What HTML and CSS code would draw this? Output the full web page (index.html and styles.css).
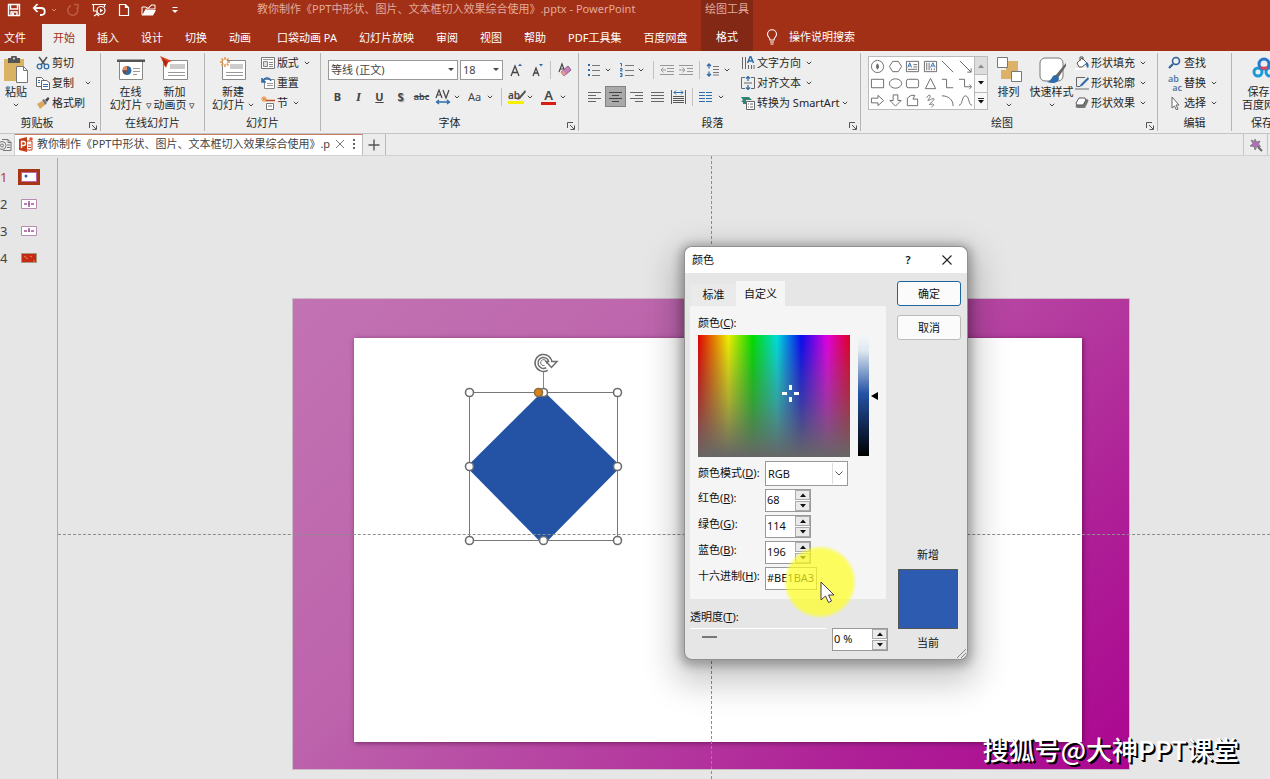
FILE: index.html
```html
<!DOCTYPE html>
<html lang="zh-CN">
<head>
<meta charset="utf-8">
<title>教你制作《PPT中形状、图片、文本框切入效果综合使用》.pptx - PowerPoint</title>
<link rel="stylesheet" href="styles.css">
</head>
<body>
<svg class="defs" aria-hidden="true">
  <symbol id="chev" viewBox="0 0 6 4"><path d="M.8.8 3 3 5.200.8" fill="none" stroke="#444"/></symbol>
  <symbol id="launch" viewBox="0 0 8 8"><path d="M.5 6V.5H6M3 3l4 4M7.500 3.500v4h-4" fill="none" stroke="#555"/></symbol>
  <symbol id="up" viewBox="0 0 6 4"><path d="M0 4 3 .5 6 4z" fill="#111"/></symbol>
  <symbol id="down" viewBox="0 0 6 4"><path d="M0 0 3 3.500 6 0z" fill="#111"/></symbol>
</svg>

<header class="head">
  <div class="head-main">
    <div class="titlebar">
      <div class="qat">
        <button aria-label="保存"><svg width="14" height="14" viewBox="0 0 14 14" fill="none" stroke="#fff" stroke-width="1.400"><path d="M1.500 1.500h11v11h-11zM3.500 1.500v4.500h7V1.500M4 12.500V9h6v3.500"/><path d="M5 10h2v3H5z" fill="#fff" stroke="none"/></svg></button>
        <button class="undo" aria-label="撤消"><svg width="26" height="14" viewBox="0 0 26 14" fill="none" stroke="#fff" stroke-width="1.800"><path d="M2 5h7c5 0 5 7 0 7H8M5.500 1 1.800 5l3.700 4"/><path d="m20 6 2 2 2-2" stroke="#d6907e" stroke-width="1"/></svg></button>
        <button aria-label="恢复"><svg width="14" height="14" viewBox="0 0 14 14" fill="none" stroke="#bd5a42" stroke-width="1.600"><path d="M5 2.500a5 5 0 1 0 6 2M8 1.500h4v4"/></svg></button>
        <button aria-label="放映"><svg width="16" height="14" viewBox="0 0 16 14" fill="none" stroke="#fff" stroke-width="1.200"><path d="M1 1.500h14M2.500 2v6h3M13.500 2v2M6 8v3M3 13l3-2 2 2"/><circle cx="10" cy="7.500" r="4"/><path d="m9 5.500 3 2-3 2z" fill="#fff" stroke="none"/></svg></button>
        <button aria-label="新建"><svg width="12" height="14" viewBox="0 0 12 14" fill="none" stroke="#fff" stroke-width="1.200"><path d="M1.500 1.500h6l3 3v8h-9zM7.500 1.500v3h3"/></svg></button>
        <button aria-label="打开"><svg width="16" height="14" viewBox="0 0 16 14"><path d="M1 12V4h4l1 1h2V4l2-1V2h4v4H5l-3 6z" fill="none" stroke="#fff"/><path d="M4.500 7H15l-3 5.500H1.500z" fill="#fff"/></svg></button>
        <button class="custom-qat" aria-label="自定义快速访问工具栏"><svg width="8" height="8" viewBox="0 0 8 8"><path d="M1.500 1.500h5" stroke="#fff"/><path d="M1 4h6L4 7z" fill="#fff"/></svg></button>
      </div>
      <div class="doc-title">教你制作《PPT中形状、图片、文本框切入效果综合使用》.pptx - PowerPoint</div>
    </div>
    <nav class="tabs">
      <button class="file">文件</button><button class="on">开始</button><button>插入</button><button>设计</button><button>切换</button><button>动画</button><button class="wide">口袋动画 PA</button><button>幻灯片放映</button><button>审阅</button><button>视图</button><button>帮助</button><button>PDF工具集</button><button>百度网盘</button>
    </nav>
  </div>
  <div class="context"><span>绘图工具</span><button>格式</button></div>
  <div class="tell"><button><svg width="12" height="16" viewBox="0 0 12 16" fill="none" stroke="#fff" stroke-width="1.100"><path d="M4 11C4 8.500 1.500 8 1.500 5.200a4.500 4.500 0 0 1 9 0C10.500 8 8 8.500 8 11zM4 13h4M4.500 15h3"/></svg>操作说明搜索</button></div>
</header>

<section class="ribbon">
  <div class="group g-clip">
    <div class="body">
      <button class="big"><svg width="26" height="28" viewBox="0 0 26 28"><path d="M1 3h20v22H1z" fill="#d9b262"/><path d="M5 2h3a3 3 0 0 1 6 0h3v5H5z" fill="#555"/><circle cx="11" cy="2.500" r="1" fill="#eee"/><path d="M13.500 10.500h7l4 4v12h-11z" fill="#fff" stroke="#777"/><path d="M20.500 10.500v4h4" fill="none" stroke="#777"/></svg><span>粘贴</span><svg class="chev"><use href="#chev"/></svg></button>
      <div class="stack">
        <button><svg width="14" height="14" viewBox="0 0 14 14" fill="none"><path d="M3 1l6 8M11 1 5 9" stroke="#555" stroke-width="1.600"/><circle cx="3.500" cy="10.500" r="2.300" stroke="#2f6cab" stroke-width="1.300"/><circle cx="10.500" cy="10.500" r="2.300" stroke="#2f6cab" stroke-width="1.300"/></svg>剪切</button>
        <button><svg width="14" height="14" viewBox="0 0 14 14" stroke="#666"><path d="M.5 1.500h5l2 2v7h-7z" fill="#fff"/><path d="M5.500 4.500h5l3 2v7h-8z" fill="#fff"/><path d="M2 4.500h2M2 6.500h2M7 8.500h5M7 10.500h5" stroke="#2f6cab"/></svg>复制 <svg class="chev far"><use href="#chev"/></svg></button>
        <button><svg width="14" height="14" viewBox="0 0 14 14"><path d="m1 8 5-3 3 4-5 4c-1-2-2-3-3-5z" fill="#dba85a"/><path d="m6 4 2-1 3 4-2 2z" fill="#777"/><path d="m9 4 3-3 1.500 1.500L11 6z" fill="#444"/></svg>格式刷</button>
      </div>
    </div>
    <footer><span>剪贴板</span><button aria-label="剪贴板选项"><svg><use href="#launch"/></svg></button></footer>
  </div>

  <div class="group g-online">
    <div class="body">
      <button class="big"><svg width="28" height="28" viewBox="0 0 28 28"><path d="M2.500 5.500h23v18h-23z" fill="#fff" stroke="#888"/><path d="M0 3.500h28v2.500H0z" fill="#555"/><circle cx="10" cy="14.500" r="4.500" fill="#2f6aa5"/><path d="M10 14.500V10a4.500 4.500 0 0 0-4.500 4.500z" fill="#eb8b5c"/><path d="M10 14.500H5.500A4.500 4.500 0 0 0 8 18.500z" fill="#7b4335"/><path d="M16 12.500h7M16 15.500h7M16 18.500h4" stroke="#999"/></svg><span>在线<br>幻灯片 <i>▿</i></span></button>
      <button class="big"><svg width="28" height="28" viewBox="0 0 28 28"><path d="M3.500 4.500h24v19h-24z" fill="#fff" stroke="#888"/><path d="M10 8h15v5H10z" fill="#ccc"/><path d="M8 16.500h17M8 19.500h17" stroke="#999"/><path d="M0 0 12 5 8 6.500 6 12z" fill="#dc4726"/><path d="m2 2 6 4-3 5z" fill="#ad2815"/></svg><span>新加<br>动画页 <i>▿</i></span></button>
    </div>
    <footer><span>在线幻灯片</span></footer>
  </div>

  <div class="group g-slide">
    <div class="body">
      <button class="big"><svg width="28" height="28" viewBox="0 0 28 28"><path d="M3.500 4.500h23v19h-23z" fill="#fff" stroke="#888"/><path d="M11 8h13v5H11z" fill="#ccc"/><path d="M7 16.500h17M7 19.500h17" stroke="#999"/><path d="M6 1v10M1 6h10M2.500 2.500l7 7M9.500 2.500l-7 7" stroke="#e68d3c" stroke-width="1.400"/><circle cx="6" cy="6" r="2.200" fill="#fff"/></svg><span>新建<br>幻灯片 <svg class="chev"><use href="#chev"/></svg></span></button>
      <div class="stack">
        <button><svg width="14" height="14" viewBox="0 0 14 14"><path d="M.5 1.500h13v11H.5z" fill="#fff" stroke="#777"/><path d="M2 3.500h10" stroke="#999"/><path d="M2.500 5.500h4v5h-4zM8 6.500h4M8 8.500h4M8 10.500h4" fill="#ddd" stroke="#888"/></svg>版式 <svg class="chev"><use href="#chev"/></svg></button>
        <button><svg width="14" height="14" viewBox="0 0 14 14"><path d="M3.500 3.500h10v9h-10z" fill="#fff" stroke="#888"/><path d="M6 7.500h6M6 9.500h6" stroke="#999"/><path d="M1 2v4h4M1.500 5.500C4 1 8 1 10 5" fill="none" stroke="#2f6cab" stroke-width="1.600"/></svg>重置</button>
        <button><svg width="14" height="14" viewBox="0 0 14 14"><path d="M4 4.500h10" stroke="#c74a22" stroke-width="1.500"/><path d="M5.500 7.500h7v6h-7z" fill="#fff" stroke="#777"/><path d="M7 10h4" stroke="#777"/><path d="M3 0v6M0 3h6M1 1l4 4M5 1 1 5" stroke="#e68d3c"/></svg>节 <svg class="chev"><use href="#chev"/></svg></button>
      </div>
    </div>
    <footer><span>幻灯片</span></footer>
  </div>

  <div class="group g-font">
    <div class="rows">
      <div class="row">
        <span class="pick face"><select aria-label="字体"><option>等线 (正文)</option></select></span>
        <span class="pick size"><select aria-label="字号"><option>18</option></select></span>
        <button class="tb" aria-label="增大字号"><svg width="16" height="16" viewBox="0 0 16 16"><path d="m3 14 4-10 4 10M4.500 10.500h5" fill="none" stroke="#444" stroke-width="1.300"/><path d="m10 4 2-2.500L14 4z" fill="#2f6cab"/></svg></button>
        <button class="tb" aria-label="减小字号"><svg width="16" height="16" viewBox="0 0 16 16"><path d="m4 14 3-8 3 8M5 11h4" fill="none" stroke="#444" stroke-width="1.300"/><path d="m10 2 2 2.500L14 2z" fill="#2f6cab"/></svg></button>
        <i class="sep"></i>
        <button class="tb" aria-label="清除格式"><svg width="16" height="16" viewBox="0 0 16 16"><path d="m2 10 3-8 3 8M3 7h4" fill="none" stroke="#444" stroke-width="1.200"/><path d="m4 10 7-6 3 4-7 6z" fill="#c680b8" stroke="#8d588f"/><path d="m4 10 2-2 3 4-2 2z" fill="#ec9b8a"/></svg></button>
      </div>
      <div class="row">
        <button class="tb b">B</button><button class="tb it">I</button><button class="tb u">U</button><button class="tb sh">S</button><button class="tb st">abc</button>
        <button class="dd" aria-label="字符间距"><svg width="16" height="16" viewBox="0 0 16 16" fill="none"><path d="m1 9 3-8 3 8M2 6h4M8 1l3 8 3-8" stroke="#444" stroke-width="1.200"/><path d="M2 13h12M4 11l-2.500 2L4 15M12 11l2.500 2-2.500 2" stroke="#2f6cab" stroke-width="1.300"/></svg><svg class="chev"><use href="#chev"/></svg></button>
        <button class="dd">Aa<svg class="chev"><use href="#chev"/></svg></button>
        <i class="sep"></i>
        <button class="dd" aria-label="突出显示"><span class="hl">ab<svg width="10" height="12" viewBox="0 0 10 12"><path d="M9 1 3 8l-2 3 3-1 6-7z" fill="#555"/></svg></span><svg class="chev"><use href="#chev"/></svg></button>
        <button class="dd"><span class="fc">A</span><svg class="chev"><use href="#chev"/></svg></button>
      </div>
    </div>
    <footer><span>字体</span><button aria-label="字体选项"><svg><use href="#launch"/></svg></button></footer>
  </div>

  <div class="group g-para">
    <div class="body">
      <div class="rows">
        <div class="row">
          <button class="dd" aria-label="项目符号"><svg width="14" height="14" viewBox="0 0 14 14"><path d="M1 1h2v2H1zM1 6h2v2H1zM1 11h2v2H1z" fill="#2f6cab"/><path d="M5 2.500h8M5 7.500h8M5 12.500h8" stroke="#777"/></svg><svg class="chev"><use href="#chev"/></svg></button>
          <button class="dd" aria-label="编号"><svg width="14" height="14" viewBox="0 0 14 14"><path d="M0 .5h1.500V3.500M0 5.500h2v1.500H.5v1h2M0 10.500h2v3H0M.5 12h1.500" fill="none" stroke="#2f6cab"/><path d="M5 2.500h9M5 7.500h9M5 12.500h9" stroke="#777"/></svg><svg class="chev"><use href="#chev"/></svg></button>
          <i class="sep"></i>
          <button class="tb" aria-label="减少缩进"><svg width="14" height="14" viewBox="0 0 14 14" fill="none" stroke="#999"><path d="M0 2.500h14M7 5.500h7M7 8.500h7M0 11.500h14M6 7H1M3.500 4.500 1 7l2.500 2.500"/></svg></button>
          <button class="tb" aria-label="增加缩进"><svg width="14" height="14" viewBox="0 0 14 14" fill="none" stroke="#999"><path d="M0 2.500h14M8 5.500h6M8 8.500h6M0 11.500h14M0 7h6M3.500 4.500 6 7 3.500 9.500"/></svg></button>
          <i class="sep"></i>
          <button class="dd" aria-label="行距"><svg width="14" height="14" viewBox="0 0 14 14" fill="none"><path d="M3 1v4.500M3 8.500V13M1 3l2-2 2 2M1 11l2 2 2-2" stroke="#2f6cab" stroke-width="1.300"/><path d="M7 3.500h6M7 6.500h6M7 9.500h6M7 12h6" stroke="#777"/></svg><svg class="chev"><use href="#chev"/></svg></button>
        </div>
        <div class="row">
          <button class="tb" aria-label="左对齐"><svg width="13" height="10" viewBox="0 0 13 10" stroke="#666"><path d="M0 .5h13M0 3.500h8M0 6.500h13M0 9.500h8"/></svg></button>
          <button class="tb on" aria-label="居中"><svg width="13" height="10" viewBox="0 0 13 10" stroke="#444"><path d="M0 .5h13M3 3.500h7M0 6.500h13M3 9.500h7"/></svg></button>
          <button class="tb" aria-label="右对齐"><svg width="13" height="10" viewBox="0 0 13 10" stroke="#666"><path d="M0 .5h13M5 3.500h8M0 6.500h13M5 9.500h8"/></svg></button>
          <button class="tb" aria-label="两端对齐"><svg width="13" height="10" viewBox="0 0 13 10" stroke="#666"><path d="M0 .5h13M0 3.500h13M0 6.500h13M0 9.500h13"/></svg></button>
          <button class="tb" aria-label="分散对齐"><svg width="15" height="14" viewBox="0 0 15 14" fill="none"><path d="M.5 0v14M14.500 0v14M3 2.500h9M5 .5l-2 2 2 2M10 .5l2 2-2 2" stroke="#2f6cab"/><path d="M2 6.500h11M2 8.500h11M2 10.500h11M2 12.500h11" stroke="#555"/></svg></button>
          <i class="sep"></i>
          <button class="dd" aria-label="分栏"><svg width="13" height="10" viewBox="0 0 13 10" stroke="#2f6cab"><path d="M0 .5h6M0 3.500h6M0 6.500h6M0 9.500h6M7 .5h6M7 3.500h6M7 6.500h6M7 9.500h6"/></svg><svg class="chev"><use href="#chev"/></svg></button>
        </div>
      </div>
      <div class="stack">
        <button><svg width="14" height="14" viewBox="0 0 14 14" fill="none"><path d="M1.500 1v12M4.500 1v12M7.500 9v4M10.500 9v4M13 9v4" stroke="#666"/><path d="m6.500 7 3-7 3 7M7.500 5h4" stroke="#2f6cab" stroke-width="1.500"/></svg>文字方向 <svg class="chev"><use href="#chev"/></svg></button>
        <button><svg width="14" height="14" viewBox="0 0 14 14" fill="none"><path d="M4 1.500H.5v11H4M10 1.500h3.500v11H10" stroke="#666"/><path d="M3 7h8" stroke="#666"/><path d="M7 0v5M7 9v5M5 2.500l2-2 2 2M5 11.500l2 2 2-2" stroke="#2f6cab" stroke-width="1.300"/></svg>对齐文本 <svg class="chev"><use href="#chev"/></svg></button>
        <button><svg width="14" height="14" viewBox="0 0 14 14"><path d="M0 1h8l3 3H5v4H2V6H0l2-2z" fill="#2c8673"/><path d="M5.500 5.500h8v8h-8z" fill="#fff" stroke="#666"/><path d="M7 8h1M9 8h3M7 11h1M9 11h3" stroke="#666"/></svg>转换为 SmartArt <svg class="chev near"><use href="#chev"/></svg></button>
      </div>
    </div>
    <footer><span>段落</span><button aria-label="段落选项"><svg><use href="#launch"/></svg></button></footer>
  </div>

  <div class="group g-draw">
    <div class="body">
      <div class="gallery">
        <div class="shapes">
          <button aria-label="八边形"><svg viewBox="0 0 16 16"><circle cx="8" cy="8" r="6.500"/><path d="M8 5v6M7 6v4M9 6v4"/></svg></button>
          <button aria-label="六边形"><svg viewBox="0 0 16 16"><path d="M1.500 8l3.500-5.500h6l3.500 5.500-3.500 5.500H5z"/></svg></button>
          <button aria-label="文本框"><svg viewBox="0 0 16 16"><path d="M1.500 2.500h13v11h-13zM9 6h4M9 8.500h4M3 11h10"/><path d="m3 9 2-5 2 5M4 7.500h2" stroke="#2f6cab"/></svg></button>
          <button aria-label="竖排文本框"><svg viewBox="0 0 16 16"><path d="M1.500 2.500h13v11h-13zM4 4v8M6.500 4v8M9 10v2M12 10v2"/><path d="m8 9 2.500-5L13 9M9 7.500h3" stroke="#2f6cab"/></svg></button>
          <button aria-label="直线"><svg viewBox="0 0 16 16"><path d="m2 2 12 12"/></svg></button>
          <button aria-label="箭头线"><svg viewBox="0 0 16 16"><path d="m2 2 12 12M14 10v4h-4"/></svg></button>
          <button aria-label="矩形"><svg viewBox="0 0 16 16"><path d="M1.500 3.500h13v9h-13z"/></svg></button>
          <button aria-label="椭圆"><svg viewBox="0 0 16 16"><ellipse cx="8" cy="8" rx="6.500" ry="5"/></svg></button>
          <button aria-label="圆角矩形"><svg viewBox="0 0 16 16"><rect x="1.500" y="3.500" width="13" height="9" rx="2"/></svg></button>
          <button aria-label="三角形"><svg viewBox="0 0 16 16"><path d="m8 2.500 5.500 11h-11z"/></svg></button>
          <button aria-label="肘形"><svg viewBox="0 0 16 16"><path d="M2 3.500h5v9h7"/></svg></button>
          <button aria-label="肘形箭头"><svg viewBox="0 0 16 16"><path d="M1 3.500h6v8h7M12 9l2.500 2.500L12 14"/></svg></button>
          <button aria-label="右箭头"><svg viewBox="0 0 16 16"><path d="M1.500 5.500h7v-3L14.500 8l-6 5.500v-3h-7z"/></svg></button>
          <button aria-label="下箭头"><svg viewBox="0 0 16 16"><path d="M5.500 2v6h-3.500L8 14l6-6h-3.500V2z"/></svg></button>
          <button aria-label="任意多边形"><svg viewBox="0 0 16 16"><path d="M2.500 13.500v-8l4-3h4l-2 4h5v7z"/></svg></button>
          <button aria-label="自由曲线"><svg viewBox="0 0 16 16"><path d="M4 5c2-4 5-3 3 0s-3 4 1 2 5-1 2 2-5 4-1 3 2 2 0 3"/></svg></button>
          <button aria-label="弧形"><svg viewBox="0 0 16 16"><path d="M2 3c7 0 12 4 12 11"/></svg></button>
          <button aria-label="曲线"><svg viewBox="0 0 16 16"><path d="M1 13C5 13 4 3 8 3s3 10 7 10"/></svg></button>
        </div>
        <div class="scroll"><button aria-label="上一行" class="dim"><svg><use href="#up"/></svg></button><button aria-label="下一行"><svg><use href="#down"/></svg></button><button aria-label="更多形状" class="more"><svg><use href="#down"/></svg></button></div>
      </div>
      <button class="big arrange"><svg width="26" height="28" viewBox="0 0 26 28"><path d="M10 5h12v10H10zM5 14h12v9H5z" fill="#dcb268"/><path d="M1.500 1.500h10v10h-10zM15.500 15.500h10v10h-10z" fill="#fff" stroke="#777"/></svg><span>排列</span><svg class="chev"><use href="#chev"/></svg></button>
      <button class="big quick"><svg width="28" height="28" viewBox="0 0 28 28"><rect x="2" y="2" width="23" height="23" rx="5" fill="#fff" stroke="#777"/><path d="M28 7 17 20l3 2 8-12z" fill="#666"/><path d="M18 19c-5 0-3 5-9 7 6 2 12 1 12-4z" fill="#2f6cab"/></svg><span>快速样式</span><svg class="chev"><use href="#chev"/></svg></button>
      <div class="stack">
        <button><svg width="14" height="14" viewBox="0 0 14 14"><path d="m2 7 5-5 5 5-5 4H4z" fill="#fff" stroke="#555"/><path d="M5 5V1h3v3" fill="none" stroke="#555"/><path d="M11 6c3 1 3 4 2 6-2-1-2-3-2-6z" fill="#2f6cab"/><path d="M0 12h11v2H0z" fill="#fff"/></svg>形状填充 <svg class="chev"><use href="#chev"/></svg></button>
        <button><svg width="14" height="14" viewBox="0 0 14 14"><path d="M10 1.500H1.500v9H5" fill="none" stroke="#666"/><path d="m13 1-7 7-2 3 3-1 7-7z" fill="#2f6cab"/><path d="M0 13h14" stroke="#999" stroke-width="1.500"/></svg>形状轮廓 <svg class="chev"><use href="#chev"/></svg></button>
        <button><svg width="14" height="14" viewBox="0 0 14 14"><path d="m1 9 3-6h7c2 0 3 1 2 3l-3 6H3c-2 0-3-1-2-3z" fill="#777"/><path d="m1 7 3-5h6l1 2-3 5H2z" fill="#fff" stroke="#555"/></svg>形状效果 <svg class="chev"><use href="#chev"/></svg></button>
      </div>
    </div>
    <footer><span>绘图</span><button aria-label="形状格式选项"><svg><use href="#launch"/></svg></button></footer>
  </div>

  <div class="group g-edit">
    <div class="body">
      <div class="stack">
        <button><svg width="14" height="14" viewBox="0 0 14 14" fill="none" stroke="#2f5f96"><circle cx="8" cy="5" r="3.500" stroke-width="1.600"/><path d="M5 8 1 12" stroke-width="2.200"/></svg>查找</button>
        <button><span class="abac"><b>ab</b><b>ac</b></span>替换 <svg class="chev mid"><use href="#chev"/></svg></button>
        <button><svg width="14" height="14" viewBox="0 0 14 14"><path d="M4 1v11l2.500-2 2 4 1.500-1-2-4h3z" fill="#fff" stroke="#666"/></svg>选择 <svg class="chev"><use href="#chev"/></svg></button>
      </div>
    </div>
    <footer><span>编辑</span></footer>
  </div>

  <div class="group g-save">
    <div class="body">
      <button class="big"><svg width="28" height="28" viewBox="0 0 28 28" fill="none" stroke="#1a9bd8" stroke-width="3"><circle cx="8" cy="16" r="4"/><circle cx="20" cy="16" r="4"/><circle cx="14" cy="8" r="5" stroke="#2577cf"/><path d="M11 11a4 4 0 0 0 6 0" stroke="#e0475b"/></svg><span>保存到<br>百度网盘</span></button>
    </div>
    <footer><span>保存</span></footer>
  </div>
</section>

<div class="docbar">
  <button class="home" aria-label="文档列表"><svg width="14" height="14" viewBox="0 0 14 14" fill="none" stroke="#777"><path d="M3 1.500h6l3 3v8H4M9 1.500v3h3M8 7h3M8 9.500h3"/><circle cx="3" cy="7.500" r="4"/><circle cx="3" cy="7.500" r="1.500"/></svg></button>
  <div class="doctab">
    <svg width="14" height="15" viewBox="0 0 14 15"><path d="m0 2 8-2v15l-8-2z" fill="#c43e1c"/><path d="M8 4h5v9H8" fill="#fff" stroke="#c43e1c"/><path d="M9 8h3M9 10.500h3" stroke="#c43e1c"/><circle cx="12" cy="2" r="1.800" fill="#e0582f"/><path d="M2.500 11V4.500h2a1.800 1.800 0 0 1 0 4h-2" fill="none" stroke="#fff" stroke-width="1.300"/></svg>
    <span>教你制作《PPT中形状、图片、文本框切入效果综合使用》.p</span>
    <button aria-label="关闭"><svg width="10" height="10" viewBox="0 0 10 10"><path d="m1 1 8 8M9 1 1 9" stroke="#777"/></svg></button>
    <button aria-label="更多"><svg width="4" height="10" viewBox="0 0 4 10"><path d="M1 0h2v2H1zM1 4h2v2H1zM1 8h2v2H1z" fill="#666"/></svg></button>
  </div>
  <button class="add" aria-label="新建标签"><svg width="12" height="12" viewBox="0 0 12 12"><path d="M6 .5v11M.5 6h11" stroke="#555" stroke-width="1.400"/></svg></button>
  <button class="wand" aria-label="工具"><svg width="14" height="14" viewBox="0 0 14 14"><path d="m6 1 1.500 3L11 3 9.500 6l2 2.500H8L6 12 5 8.500 1 8l3-2.500L2 2l3.500 1.500z" fill="#b56abb" stroke="#777" stroke-width=".8"/><path d="m9 9 4 4" stroke="#666" stroke-width="2"/></svg></button>
</div>

<main class="work">
  <ol class="thumbs">
    <li class="on"><span>1</span><svg width="22" height="16" viewBox="0 0 22 16"><path d="M0 0h22v16H0z" fill="#a83416"/><path d="M3 3h16v10H3z" fill="#bb67ad"/><path d="M4 4h14v8H4z" fill="#fff"/><circle cx="8" cy="7" r="1.500" fill="#3558aa"/></svg></li>
    <li><span>2</span><svg width="22" height="16" viewBox="0 0 22 16"><path d="M3.500 3.500h15v9h-15z" fill="#fff" stroke="#b78ab0"/><path d="M6 8h3M10 8h2M13 8h3M11 5v6" stroke="#a4529a" stroke-width="1.500"/></svg></li>
    <li><span>3</span><svg width="22" height="16" viewBox="0 0 22 16"><path d="M3.500 3.500h15v9h-15z" fill="#fff" stroke="#b78ab0"/><path d="M6 8h3M10 8h2M13 8h3M11 5v4" stroke="#a4529a" stroke-width="1.500"/></svg></li>
    <li><span>4</span><svg width="22" height="16" viewBox="0 0 22 16"><path d="M3.500 3.500h15v9h-15z" fill="#c52a14" stroke="#a59a80"/><path d="m6 6 4 3M12 6l2 1M15 11h2" stroke="#e9884c"/></svg></li>
  </ol>
  <div class="canvas">
    <div class="slide">
      <div class="panel">
        <svg class="shape" width="160" height="212" viewBox="0 0 160 212">
          <path d="M80.500 46v-18" stroke="#888"/>
          <path d="M80.500 49 156 122.500v4L83 200.500h-5L5 126.500v-3L78 51z" fill="#2452a5"/>
          <path d="M6.500 50.500h148v148H6.500z" fill="none" stroke="#777"/>
          <g fill="#fff" stroke="#6d6d6d" stroke-width="1.600"><circle cx="6.500" cy="50.500" r="4"/><circle cx="154.500" cy="50.500" r="4"/><circle cx="80.500" cy="50.500" r="4"/><circle cx="6.500" cy="124.500" r="4"/><circle cx="154.500" cy="124.500" r="4"/><circle cx="6.500" cy="198.500" r="4"/><circle cx="80.500" cy="198.500" r="4"/><circle cx="154.500" cy="198.500" r="4"/></g>
          <circle cx="75.500" cy="50.500" r="4" fill="#d98314" stroke="#857050" stroke-width="1.600"/>
          <path d="M87.500 21a7 7 0 1 0-3.500 6" fill="none" stroke="#6d6d6d" stroke-width="4.500"/>
          <path d="M83 19.500h11l-5.500 6z" fill="#fff" stroke="#6d6d6d" stroke-width="1.500"/>
          <path d="M87.500 21a7 7 0 1 0-3.500 6" fill="none" stroke="#fff" stroke-width="1.500"/>
          <path d="M83.500 21.500a3 3 0 1 0-2 2" fill="none" stroke="#6d6d6d" stroke-width="1"/>
        </svg>
      </div>
    </div>
    <i class="guide v"></i><i class="guide h"></i>
  </div>
</main>

<form class="dialog" role="dialog" aria-label="颜色">
  <div class="dlg-title"><span>颜色</span><button type="button">?</button><button type="button" aria-label="关闭"><svg width="10" height="10" viewBox="0 0 10 10"><path d="m.5.5 9 9M9.500.5l-9 9" stroke="#222" stroke-width="1.100"/></svg></button></div>
  <div class="dlg-body">
    <div class="left">
      <div class="dlg-tabs"><button type="button">标准</button><button type="button" class="on">自定义</button></div>
      <div class="custom">
        <div class="cap">颜色(<u>C</u>):</div>
        <div class="mix">
          <div class="spectrum"><svg width="17" height="17" viewBox="0 0 17 17"><path d="M8.500 0v5M8.500 12v5M0 8.500h5M12 8.500h5" stroke="#fff" stroke-width="3"/></svg></div>
          <div class="lum"></div>
          <svg width="7" height="8" viewBox="0 0 7 8"><path d="M7 0v8L0 4z"/></svg>
        </div>
        <div class="fields">
          <label for="mode" class="mid">颜色模式(<u>D</u>):</label><span class="pick mode"><select id="mode"><option>RGB</option></select><svg width="8" height="5" viewBox="0 0 8 5"><path d="m.5.5 3.500 3.500L7.500.5" fill="none" stroke="#555"/></svg></span>
          <label for="r">红色(<u>R</u>):</label><span class="spin"><input id="r" value="68"><span><button type="button" aria-label="增加"><svg><use href="#up"/></svg></button><button type="button" aria-label="减少"><svg><use href="#down"/></svg></button></span></span>
          <label for="g">绿色(<u>G</u>):</label><span class="spin"><input id="g" value="114"><span><button type="button" aria-label="增加"><svg><use href="#up"/></svg></button><button type="button" aria-label="减少"><svg><use href="#down"/></svg></button></span></span>
          <label for="b">蓝色(<u>B</u>):</label><span class="spin"><input id="b" value="196"><span><button type="button" aria-label="增加"><svg><use href="#up"/></svg></button><button type="button" aria-label="减少"><svg><use href="#down"/></svg></button></span></span>
          <label for="hex">十六进制(<u>H</u>):</label><input id="hex" class="hex" value="#BE1BA3">
        </div>
      </div>
      <div class="alpha">
        <div class="track"><label for="alpha">透明度(<u>T</u>):</label><input id="alpha" type="range" min="0" max="100" value="10"></div>
        <span class="spin wide"><input aria-label="透明度百分比" value="0 %"><span><button type="button" aria-label="增加"><svg><use href="#up"/></svg></button><button type="button" aria-label="减少"><svg><use href="#down"/></svg></button></span></span>
      </div>
    </div>
    <div class="right">
      <button type="button" class="cmd ok">确定</button>
      <button type="button" class="cmd">取消</button>
      <div class="preview"><span>新增</span><i></i><span>当前</span></div>
    </div>
  </div>
  <svg class="grip" width="9" height="9" viewBox="0 0 9 9"><path d="M0 9 9 0M4 9l5-5" stroke="#888"/></svg>
</form>

<i class="spot"></i>
<svg class="pointer" width="15" height="23" viewBox="0 0 15 23"><path d="M1 1v18l4.500-4 3 6.500 3-1.500-3-6H14z" fill="#fff" stroke="#4a3a4a"/></svg>
<div class="mark">搜狐号@大神PPT课堂</div>
</body>
</html>
```

FILE: styles.css
```css
* { box-sizing: border-box; }

body {
  margin: 0;
  height: 100vh;
  display: flex;
  flex-direction: column;
  overflow: hidden;
  position: relative;
  background: #e6e6e6;
  color: #262626;
  font: 11px/16px "Noto Sans", "Noto Sans CJK SC", sans-serif;
}

button, input, select { font: inherit; color: inherit; }
button { margin: 0; padding: 0; border: 0; background: none; white-space: nowrap; }
svg { flex: none; display: block; }
i { font-style: normal; }
.defs { position: absolute; width: 0; height: 0; }

/* header */
.head {
  display: grid;
  grid-template-columns: 701px 52px 1fr;
  height: 51px;
  flex: none;
  background: #a13017;
  color: #fff;
}
.head-main { display: flex; flex-direction: column; }
.titlebar { display: flex; align-items: center; height: 19px; margin-bottom: 5px; color: #e3ab9c; }
.doc-title { line-height: 18px; align-self: flex-start; }
.qat { display: flex; align-items: center; width: 257px; padding-left: 7px; gap: 11px; }
.qat .undo { margin-right: -3px; }
.qat .custom-qat { margin-left: 3px; }
.tabs { display: flex; height: 27px; }
.tabs button { padding: 0 11px; }
.tabs .file { padding-left: 4px; margin-right: 5px; }
.tabs .on { background: #eee; color: #a13017; }
.tabs .wide { margin-left: 4px; }
.context {
  display: flex;
  flex-direction: column;
  align-items: center;
  gap: 11px;
  padding-top: 1px;
  background: #822814;
}
.context span { color: #e3ab9c; }
.context button { height: 18px; }
.tell { padding: 28px 0 0 13px; }
.tell button { display: flex; align-items: center; gap: 11px; height: 18px; }

/* ribbon */
.ribbon {
  display: grid;
  grid-template-columns: 101px 104px 116px 258px 282px 297px 74px 1fr;
  height: 83px;
  flex: none;
  overflow: hidden;
  background: #eee;
  border-bottom: 1px solid #c4c4c4;
  padding: 2px 0;
}
.group {
  display: flex;
  flex-direction: column;
  justify-content: space-between;
  min-width: 0;
  border-right: 1px solid #b5b5b5;
}
.group footer { display: flex; height: 15px; line-height: 14px; position: relative; }
.group footer span { flex: 1; text-align: center; white-space: nowrap; }
.group footer button { position: absolute; right: 3px; bottom: 1px; }
.group footer button svg { width: 8px; height: 8px; }
.body { display: flex; }
.chev { width: 6px; height: 4px; }
.big { display: flex; flex-direction: column; align-items: center; line-height: 13px; height: 60px; }
.big > svg:first-child { margin: 3px 0 1px; }
.big > .chev { margin-top: 5px; }
.big span .chev { display: inline-block; vertical-align: 2px; }
.stack { display: flex; flex-direction: column; align-items: flex-start; }
.stack button { display: flex; align-items: center; gap: 2px; height: 20px; }
.stack .chev { margin-left: 3px; }
.stack .far { margin-left: 9px; }
.stack .near { margin-left: 1px; }

.g-clip .big { padding-left: 3px; }
.g-clip .stack { margin-left: 7px; }
.g-clip footer span { padding-right: 26px; }
.g-online .body { justify-content: center; gap: 2px; }
.g-slide .body { padding-left: 7px; gap: 7px; }

.rows { display: flex; flex-direction: column; gap: 6px; padding-top: 6px; }
.row { display: flex; align-items: center; height: 21px; }
.tb { display: flex; align-items: center; justify-content: center; width: 21px; height: 21px; }
.tb.on { background: #a9a9a9; border: 1px solid #828282; }
.dd { display: flex; align-items: center; justify-content: space-between; width: 33px; height: 21px; padding: 0 5px 0 3px; }
.sep { width: 1px; height: 18px; margin: 0 3px; background: #c2c2c2; }
.g-font .rows { padding-left: 6px; }
.g-font .row { color: #444; }
.b { font-weight: 700; }
.it { font-family: "Liberation Serif", serif; font-style: italic; font-size: 13px; font-weight: 700; }
.u { font-weight: 700; text-decoration: underline; }
.sh { font-weight: 700; text-shadow: 1px 1px 1px #888; }
.st { font-weight: 600; text-decoration: line-through; font-size: 9px; }
.hl { display: flex; height: 15px; line-height: 12px; border-bottom: 3px solid #f7ee00; font-weight: 600; width: 16px; font-size: 10px; }
.hl svg { margin-left: -4px; }
.fc { width: 15px; height: 16px; line-height: 13px; border-bottom: 3px solid #d81e10; text-align: center; font-size: 13px; font-weight: 600; }

.pick { position: relative; display: flex; }
.pick select {
  appearance: none;
  width: 100%;
  height: 20px;
  margin: 0;
  padding: 0 2px;
  border: 1px solid #999;
  border-radius: 0;
  background: #fff;
}
.face { width: 130px; margin: 0 2px 0 1px; }
.size { width: 43px; margin-right: 2px; }
.face::after, .size::after {
  content: "";
  position: absolute;
  right: 4px;
  top: 8px;
  border: 3px solid transparent;
  border-top-color: #444;
}

.g-para .rows { padding-left: 5px; }
.g-para .row:first-child .dd { width: 35px; padding-right: 6px; }
.g-para .body { gap: 5px; }
.g-para .rows { width: 157px; }
.g-para footer span, .g-draw footer span { padding-right: 14px; }

.gallery { display: flex; flex: none; width: 120px; border: 1px solid #bbb; background: #fff; height: 54px; margin: 3px 0 0 7px; }
.shapes { display: grid; flex: 1; grid-template-columns: repeat(6, 1fr); align-content: center; }
.shapes button { height: 17px; display: grid; place-items: center; }
.shapes svg { width: 15px; height: 15px; fill: none; stroke: #666; }
.scroll { display: grid; width: 13px; grid-template-rows: 1fr 1fr 1fr; border-left: 1px solid #bbb; }
.scroll button { display: grid; place-items: center; background: #f8f8f8; }
.scroll button + button { border-top: 1px solid #bbb; }
.scroll svg { width: 6px; height: 4px; }
.scroll .dim { background: #ddd; }
.scroll .dim svg { opacity: .4; }
.scroll .more { align-content: center; gap: 1px; }
.scroll .more::before { content: ""; width: 6px; height: 1px; background: #333; }
.arrange { width: 41px; }
.quick { width: 45px; }
.g-draw .stack { margin-left: 1px; }

.g-edit .stack { padding-left: 10px; }
.abac { display: grid; width: 14px; color: #5577a8; text-align: left; }
.abac b { font-size: 9px; line-height: 9px; font-weight: 600; }
.abac b + b { text-align: right; }
.g-save { border: 0; }
.g-save .big { padding: 0 10px; }
.g-save footer { padding-left: 19px; }
.g-save footer span { text-align: left; }

/* document tabs */
.docbar { display: flex; height: 22px; flex: none; background: #ececec; border-bottom: 1px solid #d2d2d2; }
.docbar button { display: grid; place-items: center; }
.docbar .home { width: 18px; margin-left: -3px; border-right: 1px solid #ccc; }
.doctab { display: flex; align-items: center; gap: 4px; padding: 0 4px 2px 4px; background: #fff; border-top: 1px solid #c87b62; border-right: 1px solid #bbb; color: #444; white-space: nowrap; }
.doctab button { width: 12px; height: 16px; }
.doctab button:last-child { width: 8px; }
.docbar .add { width: 23px; border-right: 1px solid #bbb; }
.docbar .wand { width: 25px; margin: 0 2px 0 auto; border: 1px solid #c4c4c4; border-width: 0 1px; }

/* workspace */
.work { display: flex; flex: 1; min-height: 0; }
.thumbs { width: 58px; margin: 2px 0 0; padding: 5px 0 0; list-style: none; border-right: 1px solid #ababab; }
.thumbs li { display: flex; align-items: center; gap: 10px; height: 27px; font-size: 13px; color: #444; }
.thumbs .on { color: #b83b1d; }
.thumbs span { width: 8px; }
.canvas { flex: 1; position: relative; overflow: hidden; }
.slide {
  position: absolute;
  left: 234px;
  top: 142px;
  width: 838px;
  height: 472px;
  padding: 40px 48px 28px 62px;
  background: linear-gradient(135deg, #c273b3, #bd63ac 35%, #ae1d96 80%, #ab0690);
  outline: 1px solid #c9bcc7;
  outline-offset: -1px;
}
.panel { position: relative; height: 100%; background: #fff; box-shadow: 1px 1px 5px rgba(60, 0, 50, .6); }
.shape { position: absolute; left: 109px; top: 4px; }
.guide { position: absolute; }
.guide.v { left: 653px; top: 0; bottom: 0; border-left: 1px dashed #8d8d8d; }
.guide.h { top: 378px; left: 0; right: 0; border-top: 1px dashed #8d8d8d; }

/* colour dialog */
.dialog {
  position: absolute;
  left: 685px;
  top: 247px;
  width: 282px;
  border-radius: 7px;
  background: #e6e6e6;
  color: #111;
  box-shadow: 0 0 0 1px #909090, 0 2px 10px 5px rgba(0, 0, 0, .25), 0 14px 34px 10px rgba(0, 0, 0, .22);
}
.dlg-title { display: flex; align-items: center; height: 26px; padding: 0 14px 0 7px; background: #fff; border-radius: 7px 7px 0 0; }
.dlg-title span { flex: 1; }
.dlg-title button { width: 12px; display: grid; place-items: center; font-weight: 600; }
.dlg-title button + button { margin-left: 27px; }
.dlg-body { display: flex; justify-content: space-between; padding: 8px 6px 8px 5px; }
.left { width: 198px; }
.dlg-tabs { display: flex; align-items: flex-end; height: 25px; padding-left: 1px; }
.dlg-tabs button { width: 45px; height: 22px; background: #eaeaea; }
.dlg-tabs .on { width: 49px; height: 25px; background: #f5f5f5; }
.custom { width: 196px; height: 293px; padding: 9px 0 0 8px; background: #f5f5f5; }
.cap { height: 20px; }
.mix { display: flex; align-items: center; }
.spectrum {
  display: grid;
  place-items: center;
  width: 152px;
  height: 122px;
  padding: 0 0 5px 32px;
  background:
    linear-gradient(rgba(102, 102, 102, 0), rgba(102, 102, 102, .5) 55%, #666),
    linear-gradient(90deg, #e00000, #ee0 20%, #00dc00 36%, #00dcdc 52%, #0a0aee 68%, #e000e0 85%, #e00020);
}
.lum { width: 11px; height: 120px; margin: 0 2px 0 8px; background: linear-gradient(#f5f5f5, #dfe9f0 12%, #2452a5 48%, #000); }
.fields { display: grid; grid-template-columns: 67px auto; justify-content: start; gap: 3px 0; padding-top: 4px; }
.fields label { line-height: 17px; white-space: nowrap; }
.fields .mid { line-height: 24px; }
.mode { width: 83px; }
.mode select { height: 25px; padding-left: 2px; }
.mode svg { position: absolute; right: 5px; top: 10px; }
.mode::after { content: ""; position: absolute; right: 15px; top: 2px; bottom: 2px; border-left: 1px solid #ddd; }
.spin { display: flex; width: 46px; height: 23px; border: 1px solid #999; background: #fff; }
.spin input { flex: 1; min-width: 0; border: 0; padding: 0 1px; background: none; outline: 0; height: 19px; }
.spin > span { display: grid; gap: 1px; width: 15px; }
.spin button { display: grid; place-items: center; border: 1px solid #aaa; background: #eaeaea; }
.spin button svg { width: 6px; height: 4px; }
.hex { width: 52px; height: 23px; border: 1px solid #999; padding: 0 1px 3px; background: #fff; }
.alpha { display: flex; padding-top: 10px; justify-content: space-between; }
.track { width: 136px; }
.track label { display: block; height: 19px; }
.track input { appearance: none; display: block; width: 100%; height: 17px; margin: 0; background: none; border-top: 1px solid #fff; }
.track input::-webkit-slider-thumb { appearance: none; width: 15px; height: 2px; background: #777; }
.wide.spin { width: 56px; margin-top: 19px; }
.right { display: flex; flex-direction: column; width: 64px; gap: 9px; }
.cmd { height: 25px; border: 1px solid #bbb; border-radius: 3px; background: #fbfbfb; }
.cmd.ok { border-color: #1c659f; }
.preview { display: grid; justify-items: center; gap: 6px; margin-top: auto; padding-right: 2px; }
.preview i { width: 60px; height: 60px; border: 1px solid #555; background: #2d5baf; }
.grip { position: absolute; right: 1px; bottom: 1px; }

.spot {
  position: absolute;
  left: 784px;
  top: 546px;
  width: 72px;
  height: 72px;
  border-radius: 50%;
  background: radial-gradient(closest-side, rgba(255, 255, 30, .7) 88%, rgba(255, 255, 30, .2));
}
.pointer { position: absolute; left: 820px; top: 581px; }
.mark { position: absolute; right: 31px; bottom: 12px; color: #fff; font: 500 26px/36px "Noto Sans CJK SC", sans-serif; text-shadow: 2px 2px 0 #000, 1px 1px 0 #000; }
```
